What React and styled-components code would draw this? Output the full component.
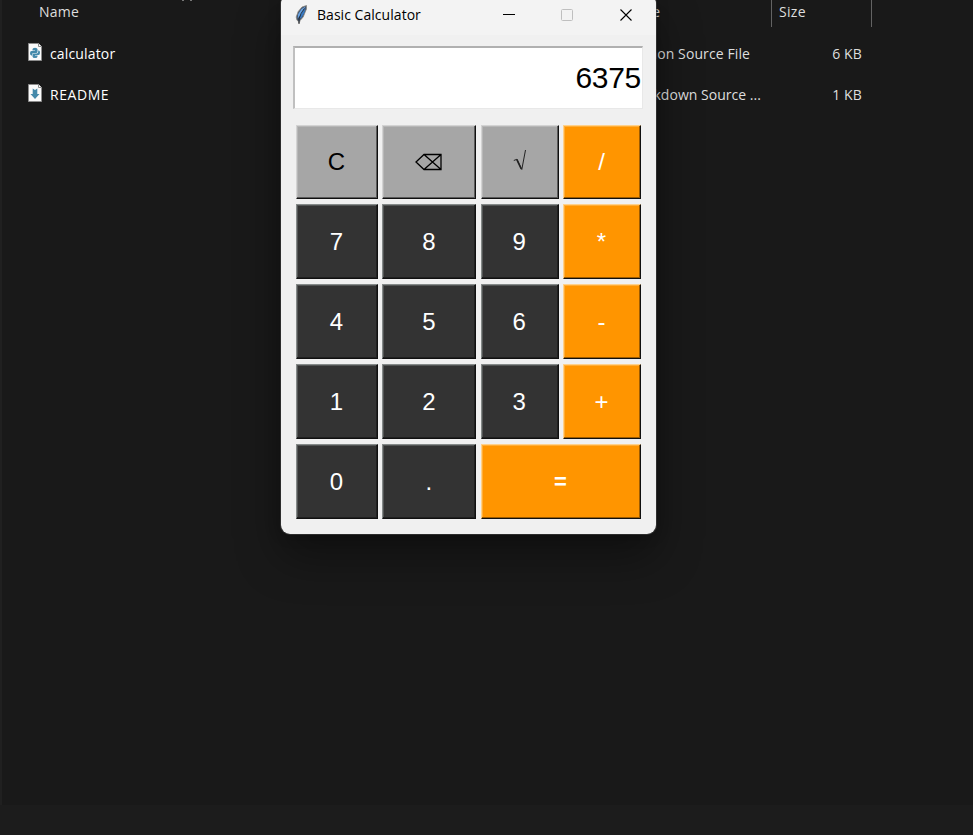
import React from "react";
import styled, { createGlobalStyle, css } from "styled-components";

const Global = createGlobalStyle`
  *, *::before, *::after { box-sizing: border-box; }
  body { margin: 0; background: #191919; overflow: hidden; }
`;

const Desktop = styled.div`
  position: relative;
  display: flex;
  flex-direction: column;
  width: 973px;
  height: 835px;
  overflow: hidden;
  background: #1c1c1c;
  color: #dedede;
  font: 14.5px "Open Sans", "Noto Sans", sans-serif;
`;

const FileList = styled.div`
  height: 805px;
  border-left: 2px solid #202020;
  background: #191919;
`;

const columns = css`
  display: grid;
  grid-template-columns: 581px 189px 100px;
`;

const HeaderRow = styled.div`
  ${columns}
  height: 27px;
`;

const HeaderCell = styled.div`
  position: relative;
  padding-left: ${(p) => p.$indent}px;
  border-right: ${(p) => (p.$divider ? "1px solid #636363" : "0")};
  line-height: 24px;
  font-size: 14px;
  letter-spacing: ${(p) => p.$tracking || 0}px;
`;

const SortMark = styled.svg`
  position: absolute;
  left: 179px;
  top: 0;
`;

const FileRow = styled.div`
  ${columns}
  height: 41px;
  margin-top: ${(p) => (p.$first ? 6 : 0)}px;
  line-height: 41px;
`;

const NameCell = styled.div`
  display: flex;
  align-items: center;
  gap: 8px;
  padding-left: 26px;
  color: #fff;
`;

const Label = styled.span`
  font-size: 14px;
  letter-spacing: ${(p) => p.$tracking || 0}px;
  white-space: nowrap;
`;

const FileIcon = styled.svg`
  flex: none;
  margin-top: -3px;
`;

const TypeCell = styled.div`
  display: flex;
  justify-content: flex-end;
  padding-right: ${(p) => p.$right}px;
`;

const SizeCell = styled.div`
  padding-right: 10px;
  text-align: right;
`;

const Window = styled.section`
  position: absolute;
  left: 281px;
  top: -5px;
  display: flex;
  flex-direction: column;
  width: 375px;
  height: 539px;
  overflow: hidden;
  border-radius: 9px;
  background: #f0f0f0;
`;

const WindowShadow = styled.div`
  position: absolute;
  left: 281px;
  top: -5px;
  width: 375px;
  height: 539px;
  border-radius: 9px;
  box-shadow: 0 0 0 1px rgba(70, 70, 70, 0.55), 0 22px 45px rgba(0, 0, 0, 0.38), 0 2px 14px rgba(0, 0, 0, 0.2);
`;

const TitleBar = styled.header`
  display: flex;
  align-items: center;
  height: 40px;
  padding: 0 0 1px 12px;
  background: #f3f3f3;
  color: #000;
`;

const Title = styled.h1`
  flex: 1;
  margin: 0 0 0 7px;
  font-size: 14px;
  font-weight: 400;
  letter-spacing: 0.04px;
`;

const Controls = styled.div`
  display: flex;
  gap: 46px;
  margin-right: 24px;
`;

const ControlIcon = styled.svg`
  margin-right: ${(p) => p.$gap || 0}px;
`;

const Display = styled.output`
  display: flex;
  align-items: center;
  justify-content: flex-end;
  height: 63px;
  margin: 11px 13px 0 12px;
  padding: 0 1px 1px 0;
  border: solid;
  border-width: 2px 1px 1px 2px;
  border-color: #b0b0b0 #e8e8e8 #e8e8e8 #c0c0c0;
  background: #fff;
  color: #000;
  font: 30px "Liberation Sans", Arial, sans-serif;
  letter-spacing: -0.3px;
`;

const Keypad = styled.div`
  display: grid;
  grid-template-columns: 82px 94px 78px 78px;
  grid-template-rows: 74px repeat(4, 75px);
  row-gap: 5px;
  justify-content: space-between;
  margin: 16px 15px 0 15px;
`;

const tones = {
  tool: { face: "#a6a6a6", ink: "#000", light: "#d3d3d3", shade: "#5a5a5a" },
  digit: { face: "#333333", ink: "#fff", light: "#858a89", shade: "#202020" },
  operator: { face: "#ff9500", ink: "#fff", light: "#ffd18a", shade: "#9d5b00" },
};

const Key = styled.button`
  grid-column: span ${(p) => p.$span || 1};
  display: flex;
  align-items: center;
  justify-content: center;
  padding: 0 1px 0 0;
  border: 1px solid;
  border-color: ${({ $tone }) => {
    const { light } = tones[$tone];
    return `${light} #101010 #101010 ${light}`;
  }};
  box-shadow: inset -1px -1px ${({ $tone }) => tones[$tone].shade},
    inset 1px 1px ${({ $tone }) => tones[$tone].light}66;
  background: ${({ $tone }) => tones[$tone].face};
  color: ${({ $tone }) => tones[$tone].ink};
  font: ${(p) => (p.$bold ? "bold 22px" : "24px")} "Liberation Sans", Arial, sans-serif;
`;

const Glyph = styled.svg`
  display: block;
`;

const keys = [
  ["C", "tool"], ["⌫", "tool"], ["√", "tool"], ["/", "operator"],
  ["7", "digit"], ["8", "digit"], ["9", "digit"], ["*", "operator"],
  ["4", "digit"], ["5", "digit"], ["6", "digit"], ["-", "operator"],
  ["1", "digit"], ["2", "digit"], ["3", "digit"], ["+", "operator"],
  ["0", "digit"], [".", "digit"], ["=", "operator", 2],
];

function Page({ children }) {
  return (
    <FileIcon width="14" height="18" viewBox="0 0 14 18">
      <path d="M.5.5h10l3 3v14H.5z" fill="#fafafa" stroke="#8c8c8c" />
      <path d="M10.5.5v3h3" fill="#fff" stroke="#8c8c8c" />
      {children}
    </FileIcon>
  );
}

function PythonMark() {
  return (
    <g fill="#4489aa">
      <path d="M4.5 6.2Q4.5 4.7 7 4.7t2.5 1.5v2.5q0 1.2-1.3 1.2H5.5q-1.5 0-1.5 1.6v1H3.3Q2 12.3 2 10.2t1.5-2.2H7v-.6H4.5z" />
      <path d="M9.5 13.5q0 1.5-2.5 1.5t-2.5-1.5v-1.9q0-1.2 1.3-1.2h2.9q1.5 0 1.5-1.6V7.6h.6Q12 7.6 12 9.8t-1.5 2.2H7v.6h2.5z" />
    </g>
  );
}

function Feather() {
  return (
    <svg width="17" height="22" viewBox="0 0 17 22">
      <path d="M13.5 1.5 9 3 5.2 7.5 3.2 13l.8 3.3 1.2.5L6 20l1.1-3.5L10.200 13l2-5 1.300-3z" fill="#40536b" stroke="#8a8780" strokeWidth=".8" />
      <path d="M12.500 2.500 8.500 5 5.200 10l-.6 4.500L8 10.500z" fill="#6ba5e5" />
      <path d="m12.500 4-1.200 5-2.700 4.500-2.300 1.500L8 10z" fill="#397bc4" />
      <path d="M11.300 4.500 8 9.500 6 15v4.500" fill="none" stroke="#16202a" strokeWidth=".8" />
    </svg>
  );
}

function KeyFace({ value }) {
  if (value === "⌫") {
    return (
      <Glyph width="28" height="20" viewBox="0 0 28 20" aria-label="Backspace">
        <path d="M9 2.5h17v15H9L1 10zM9 2.5l17 15M26 2.5 9 17.5" fill="none" stroke="currentColor" strokeWidth="1.3" />
      </Glyph>
    );
  }
  if (value === "√") {
    return (
      <Glyph width="14" height="26" viewBox="-1 0 14 26" aria-label="Square root">
        <path d="m.8 11.5 3-1.2 5 10.2L12.5 1" fill="none" stroke="#222" strokeWidth="1" />
        <path d="m3.8 10.3 4.5 9.7" stroke="#222" strokeWidth="1.7" />
      </Glyph>
    );
  }
  return value;
}

export default function App() {
  return (
    <Desktop>
      <Global />
      <FileList>
        <HeaderRow>
          <HeaderCell $indent={37} $tracking={0.25}>
            Name
            <SortMark width="12" height="1"><path d="M1 0h2v1H1zM9 0h2v1H9z" fill="#777" /></SortMark>
          </HeaderCell>
          <HeaderCell $indent={46} $divider>Type</HeaderCell>
          <HeaderCell $indent={7} $tracking={0.3} $divider>Size</HeaderCell>
        </HeaderRow>
        <FileRow $first>
          <NameCell>
            <Page><PythonMark /></Page>
            <Label $tracking={0.15}>calculator</Label>
          </NameCell>
          <TypeCell $right={22}><Label $tracking={0.1}>Python Source File</Label></TypeCell>
          <SizeCell><Label $tracking={0.15}>6 KB</Label></SizeCell>
        </FileRow>
        <FileRow>
          <NameCell>
            <Page><path d="M4.7 4.5 7 6l2.3-1.5V10h2.2L7 15l-4.5-5h2.200z" fill="#4489aa" /></Page>
            <Label $tracking={0.55}>README</Label>
          </NameCell>
          <TypeCell $right={11}><Label $tracking={0.03}>Markdown Source ...</Label></TypeCell>
          <SizeCell><Label $tracking={0.15}>1 KB</Label></SizeCell>
        </FileRow>
      </FileList>
      <WindowShadow />
      <Window>
        <TitleBar>
          <Feather />
          <Title>Basic Calculator</Title>
          <Controls>
            <ControlIcon width="12" height="12"><path d="M0 5.5h12" stroke="#000" /></ControlIcon>
            <ControlIcon $gap={1} width="12" height="12"><rect x=".5" y=".5" width="11" height="11" rx="1" fill="none" stroke="#bfbfbf" /></ControlIcon>
            <ControlIcon width="12" height="12"><path d="m.5.5 11 11m0-11-11 11" stroke="#000" strokeWidth="1.1" /></ControlIcon>
          </Controls>
        </TitleBar>
        <Display>6375</Display>
        <Keypad>
          {keys.map(([value, tone, span]) => (
            <Key key={value} $tone={tone} $span={span} $bold={value === "="}><KeyFace value={value} /></Key>
          ))}
        </Keypad>
      </Window>
    </Desktop>
  );
}
